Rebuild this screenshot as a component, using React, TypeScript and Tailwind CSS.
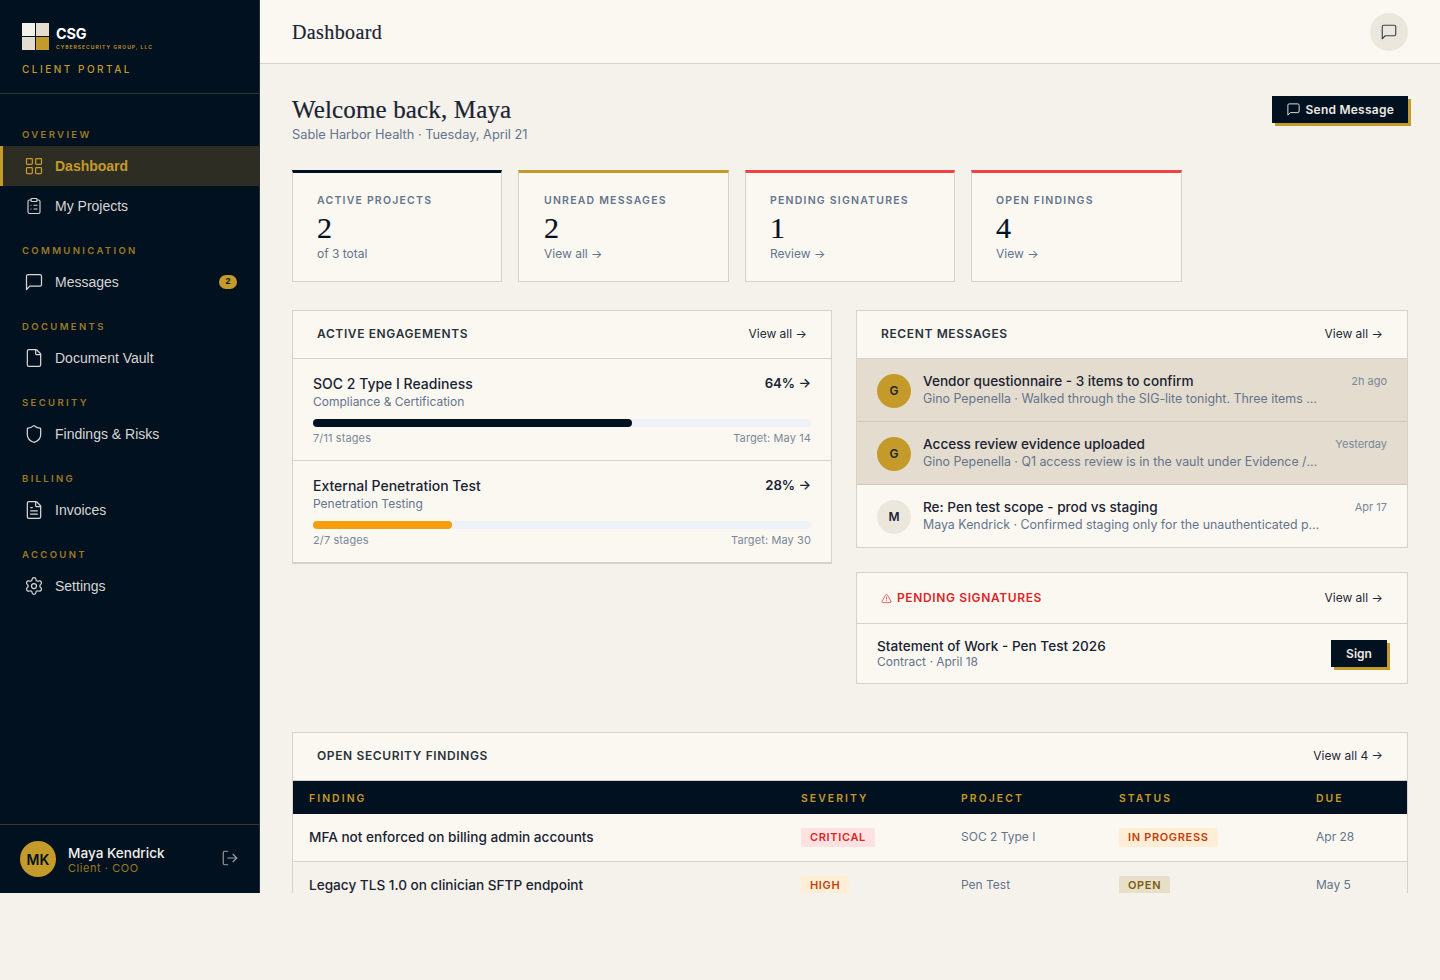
import {
  ClipboardList,
  File,
  FileText,
  LayoutGrid,
  LogOut,
  Settings,
  Shield,
  TriangleAlert,
} from "lucide-react";

const sans = "font-['Inter','Liberation_Sans',sans-serif]";
const serif = "font-['Liberation_Serif',serif] [-webkit-text-stroke:0.2px_currentColor]";

function MessageIcon({ className }: { className?: string }) {
  return (
    <svg viewBox="0 0 24 24" fill="none" stroke="currentColor" strokeWidth={1.5} strokeLinecap="round" strokeLinejoin="round" className={className}>
      <path d="M21 15a2 2 0 0 1-2 2H7l-4 4V5a2 2 0 0 1 2-2h14a2 2 0 0 1 2 2z" />
    </svg>
  );
}

const navSections = [
  { label: "OVERVIEW", items: [{ name: "Dashboard", icon: LayoutGrid, active: true }, { name: "My Projects", icon: ClipboardList, iconClass: "mx-px h-[18px] w-[18px] shrink-0" }] },
  { label: "COMMUNICATION", items: [{ name: "Messages", icon: MessageIcon, badge: "2" }] },
  { label: "DOCUMENTS", items: [{ name: "Document Vault", icon: File }] },
  { label: "SECURITY", items: [{ name: "Findings & Risks", icon: Shield }] },
  { label: "BILLING", items: [{ name: "Invoices", icon: FileText }] },
  { label: "ACCOUNT", items: [{ name: "Settings", icon: Settings }] },
];

const stats = [
  { label: "ACTIVE PROJECTS", value: "2", note: "of 3 total", bar: "border-t-[#02111f] pl-6" },
  { label: "UNREAD MESSAGES", value: "2", note: "View all →", bar: "border-t-[#c49a2a] pl-[25px]" },
  { label: "PENDING SIGNATURES", value: "1", note: "Review →", bar: "border-t-[#ef4444] pl-6" },
  { label: "OPEN FINDINGS", value: "4", note: "View →", bar: "border-t-[#ef4444] pl-6" },
];

const engagements = [
  { title: "SOC 2 Type I Readiness", type: "Compliance & Certification", pct: 64, stages: "7/11 stages", target: "Target: May 14", fill: "bg-[#02111f]" },
  { title: "External Penetration Test", type: "Penetration Testing", pct: 28, stages: "2/7 stages", target: "Target: May 30", fill: "bg-[#f59e0b]" },
];

const messages = [
  { initial: "G", subject: "Vendor questionnaire - 3 items to confirm", preview: "Gino Pepenella · Walked through the SIG-lite tonight. Three items need your confirmation", time: "2h ago", unread: true },
  { initial: "G", subject: "Access review evidence uploaded", preview: "Gino Pepenella · Q1 access review is in the vault under Evidence / Access Reviews for you", time: "Yesterday", unread: true },
  { initial: "M", subject: "Re: Pen test scope - prod vs staging", preview: "Maya Kendrick · Confirmed staging only for the unauthenticated portion of the pen test", time: "Apr 17", unread: false },
];

const findings = [
  { name: "MFA not enforced on billing admin accounts", severity: "CRITICAL", sevClass: "bg-[#fee2e2] text-[#dc2626]", project: "SOC 2 Type I", status: "IN PROGRESS", statusClass: "bg-[#ffedd5] text-[#c2410c]", due: "Apr 28", rowClass: "h-[47px] bg-[#fbf8f2]" },
  { name: "Legacy TLS 1.0 on clinician SFTP endpoint", severity: "HIGH", sevClass: "bg-[#ffedd5] text-[#c2410c]", project: "Pen Test", status: "OPEN", statusClass: "bg-[#e8dfc8] text-[#7a5c12]", due: "May 5", rowClass: "h-12 bg-[#f5f1eb]" },
];

function CardHeader({ title, link }: { title: string; link: string }) {
  return (
    <div className="flex h-12 items-center justify-between border-b border-[#d6d2cb] px-6 pb-[2px]">
      <h2 className="text-[12px] leading-4 font-semibold tracking-[0.052em] text-[#2b323c]">{title}</h2>
      <ViewLink text={link} />
    </div>
  );
}

function ViewLink({ text }: { text: string }) {
  return <a className="text-[12px] leading-4 text-[#1f2937]">{text} →</a>;
}

function Sidebar() {
  return (
    <aside className="flex w-[260px] shrink-0 flex-col border-r border-[#2a2f30] bg-[#02111f]">
      <div className="h-[94px] border-b border-[#2f352f] pt-[23px] pl-[22px]">
        <div className="flex items-start gap-[7px]">
          <div className="grid h-[27px] w-[27px] grid-cols-2 gap-px">
            <span className="bg-[#f5f1eb]" />
            <span className="bg-[#e4dccf]" />
            <span className="bg-[#e4dccf]" />
            <span className="bg-[#c49a2a]" />
          </div>
          <div className="mt-[4px]">
            <div className="text-[14.4px] leading-[14px] font-bold tracking-[-0.01em] text-white">CSG</div>
            <div className="mt-[3px] text-[5px] leading-[6px] font-semibold tracking-[0.2em] whitespace-nowrap text-[#c49a2a]">CYBERSECURITY GROUP, LLC</div>
          </div>
        </div>
        <div className="mt-3 text-[10px] leading-[14px] font-medium tracking-[0.25em] text-[#c49a2a]">CLIENT PORTAL</div>
      </div>
      <nav className="flex-1 pt-[35px]">
        {navSections.map((section) => (
          <div key={section.label} className="mb-[19px]">
            <div className="mb-[5px] pl-[22px] text-[9.6px] leading-3 font-semibold tracking-[0.24em] text-[#9a7a24]">{section.label}</div>
            {section.items.map((item) => (
              <a
                key={item.name}
                className={
                  item.active
                    ? "flex h-10 items-center gap-[11px] border-l-[3px] border-[#c49a2a] bg-[#2d2d24] pr-[22px] pl-[21px] font-['Liberation_Sans',sans-serif] text-[14px] font-bold text-[#c49a2a]"
                    : "flex h-10 items-center gap-[11px] border-l-[3px] border-transparent pr-[22px] pl-[21px] font-['Liberation_Sans',sans-serif] text-[14px] text-[#d6d6d4]"
                }
              >
                <item.icon className={item.iconClass ?? "h-5 w-5 shrink-0"} strokeWidth={1.5} />
                <span className="flex-1">{item.name}</span>
                {item.badge && (
                  <span className="flex h-[14px] w-[18px] items-center justify-center rounded-full bg-[#c49a2a] text-[9px] font-bold text-[#02111f]">{item.badge}</span>
                )}
              </a>
            ))}
          </div>
        ))}
      </nav>
      <div className="flex h-[69px] items-center border-t border-[#3a3a24] px-5">
        <div className="flex h-9 w-9 items-center justify-center rounded-full bg-[#c49a2a] text-[14px] font-semibold text-[#02111f]">MK</div>
        <div className="mt-[2px] ml-3 flex-1">
          <div className="text-[13.6px] leading-4 font-medium text-[#f0efec]">Maya Kendrick</div>
          <div className="text-[11px] leading-[14px] tracking-[0.05em] text-[#9a7a24]">Client · COO</div>
        </div>
        <LogOut className="mb-[2px] h-[18px] w-[18px] text-[#9b9f9f]" strokeWidth={1.5} />
      </div>
    </aside>
  );
}

export default function App() {
  return (
    <div className={`min-h-screen bg-[#f5f1eb] ${sans}`}>
      <div className="flex h-[893px] overflow-hidden">
        <Sidebar />
        <main className="flex min-w-0 flex-1 flex-col">
          <header className="flex h-16 shrink-0 items-center justify-between border-b border-[#d6d2cb] bg-[#fbf8f2] pr-8 pl-8">
            <h1 className={`${serif} text-[20px] tracking-[0.02em] text-[#1a2332]`}>Dashboard</h1>
            <button className="flex h-[38px] w-[38px] items-center justify-center rounded-full bg-[#ece7dd] text-[#374151]">
              <MessageIcon className="h-[18px] w-[18px]" />
            </button>
          </header>

          <div className="overflow-hidden px-8 pt-8">
            <div className="flex items-start justify-between">
              <div>
                <h2 className={`${serif} text-[25px] leading-[28px] tracking-[0.006em] text-[#1a2332]`}>Welcome back, Maya</h2>
                <p className="mt-px text-[12.8px] leading-5 text-[#64748b]">Sable Harbor Health · Tuesday, April 21</p>
              </div>
              <button className="flex h-[27px] items-center gap-[5px] bg-[#02111f] px-[14px] text-[12px] font-semibold tracking-[0.02em] text-[#ece9e4] shadow-[3px_3px_0_#c49a2a]">
                <MessageIcon className="h-[15px] w-[15px]" />
                Send Message
              </button>
            </div>

            <div className="mt-[25px] grid w-[890px] grid-cols-[210px_211px_210px_211px] gap-4">
              {stats.map((stat) => (
                <div key={stat.label} className={`h-28 border border-t-[3px] border-[#d6d2cb] bg-[#fbf8f2] pt-5 pr-6 ${stat.bar}`}>
                  <div className="text-[10.5px] leading-4 font-semibold tracking-[0.115em] text-[#64748b]">{stat.label}</div>
                  <div className={`${serif} mt-px text-[30px] leading-9 text-[#02111f]`}>{stat.value}</div>
                  <div className="text-[12px] leading-4 text-[#64748b]">{stat.note}</div>
                </div>
              ))}
            </div>

            <div className="mt-7 grid grid-cols-[540px_552px] items-start gap-6">
              <section className="border border-b-2 border-[#d6d2cb] bg-[#fbf8f2]">
                <CardHeader title="ACTIVE ENGAGEMENTS" link="View all" />
                {engagements.map((eng, i) => (
                  <div key={eng.title} className={i === 0 ? "h-[102px] border-b border-[#d6d2cb] px-5 pt-4" : "h-[101px] px-5 pt-4"}>
                    <div className="flex items-start justify-between">
                      <div className="text-[14px] leading-[18px] font-medium text-[#1a2332]">{eng.title}</div>
                      <div className="-mt-px text-[13.2px] leading-[18px] font-semibold text-[#1a2332]">{eng.pct}% →</div>
                    </div>
                    <div className="mt-px text-[12px] leading-4 text-[#64748b]">{eng.type}</div>
                    <div className="mt-[9px] h-2 rounded-full bg-[#eef1f7]">
                      <div className={`h-2 rounded-full ${eng.fill}`} style={{ width: `${eng.pct}%` }} />
                    </div>
                    <div className="mt-[3px] flex justify-between text-[11px] leading-4 tracking-[0.01em] text-[#7b8798]">
                      <span>{eng.stages}</span>
                      <span>{eng.target}</span>
                    </div>
                  </div>
                ))}
              </section>

              <div className="flex flex-col gap-6">
                <section className="border border-[#d6d2cb] bg-[#fbf8f2]">
                  <CardHeader title="RECENT MESSAGES" link="View all" />
                  {messages.map((msg, i) => (
                    <div
                      key={msg.subject}
                      className={`flex gap-3 px-5 pt-[13px] ${i < 2 ? "h-[63px] border-b border-[#cfcac1]" : "h-[62px]"} ${msg.unread ? "bg-[#e4dccf]" : ""}`}
                    >
                      <div className={`mt-[2px] flex h-[34px] w-[34px] shrink-0 items-center justify-center rounded-full text-[12px] font-semibold text-[#1a2332] ${msg.unread ? "bg-[#c49a2a]" : "bg-[#ece7dd]"}`}>
                        {msg.initial}
                      </div>
                      <div className="w-[397px] min-w-0">
                        <div className="text-[13.6px] leading-[18px] font-medium text-[#1a2332]">{msg.subject}</div>
                        <div className="mt-px truncate text-[12.4px] leading-4 text-[#64748b]">{msg.preview}</div>
                      </div>
                      <div className="ml-auto pt-[1px] text-[11px] leading-4 text-[#7b8798]">{msg.time}</div>
                    </div>
                  ))}
                </section>

                <section className="border border-[#d6d2cb] bg-[#fbf8f2]">
                  <div className="flex h-[51px] items-center justify-between border-b border-[#d6d2cb] px-6">
                    <h2 className="flex items-center gap-[5px] text-[12px] leading-4 font-semibold tracking-[0.052em] text-[#dc2626]">
                      <TriangleAlert className="h-[11px] w-[11px]" strokeWidth={1.5} />
                      PENDING SIGNATURES
                    </h2>
                    <ViewLink text="View all" />
                  </div>
                  <div className="flex h-[59px] items-center justify-between pr-5 pl-5">
                    <div>
                      <div className="text-[13.6px] leading-[15px] font-medium text-[#1a2332]">Statement of Work - Pen Test 2026</div>
                      <div className="text-[12px] leading-[15px] text-[#64748b]">Contract · April 18</div>
                    </div>
                    <button className="h-[27px] w-[56px] bg-[#02111f] text-[12px] font-semibold text-[#ece9e4] shadow-[3px_3px_0_#c49a2a]">Sign</button>
                  </div>
                </section>
              </div>
            </div>

            <section className="mt-12 border border-[#d6d2cb] bg-[#fbf8f2]">
              <CardHeader title="OPEN SECURITY FINDINGS" link="View all 4" />
              <table className="w-full table-fixed border-collapse">
                <thead>
                  <tr className="h-[33px] bg-[#02111f] text-left text-[10.4px] font-semibold tracking-[0.2em] text-[#c49a2a]">
                    <th className="w-[492px] pt-[2px] pl-4 font-semibold">FINDING</th>
                    <th className="w-[160px] pt-[2px] pl-4 font-semibold">SEVERITY</th>
                    <th className="w-[158px] pt-[2px] pl-4 font-semibold">PROJECT</th>
                    <th className="w-[197px] pt-[2px] pl-4 font-semibold">STATUS</th>
                    <th className="pt-[2px] pl-4 font-semibold">DUE</th>
                  </tr>
                </thead>
                <tbody>
                  {findings.map((f) => (
                    <tr key={f.name} className={`border-b border-[#d6d2cb] ${f.rowClass}`}>
                      <td className="pl-4 text-[13.6px] font-medium text-[#1a2332]">{f.name}</td>
                      <td className="pl-4">
                        <span className={`block w-fit rounded-[2px] px-[9px] py-[2px] text-[11px] leading-[15px] font-semibold tracking-[0.06em] ${f.sevClass}`}>{f.severity}</span>
                      </td>
                      <td className="pl-4 text-[12px] text-[#64748b]">{f.project}</td>
                      <td className="pl-4">
                        <span className={`block w-fit rounded-[2px] px-[9px] py-[2px] text-[11px] leading-[15px] font-semibold tracking-[0.06em] ${f.statusClass}`}>{f.status}</span>
                      </td>
                      <td className="pl-4 text-[12px] text-[#64748b]">{f.due}</td>
                    </tr>
                  ))}
                </tbody>
              </table>
            </section>
          </div>
        </main>
      </div>
    </div>
  );
}
